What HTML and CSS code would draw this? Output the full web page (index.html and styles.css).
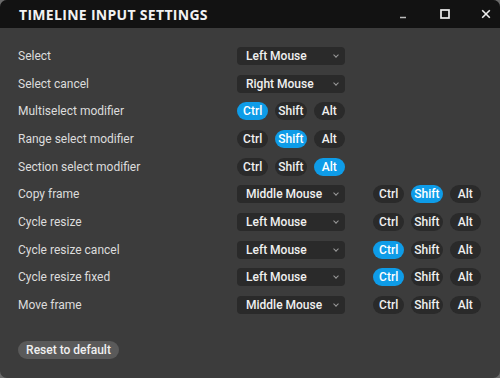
FILE: index.html
```html
<!DOCTYPE html>
<html>
<head>
<meta charset="utf-8">
<link rel="stylesheet" href="styles.css">
</head>
<body>
<div class="window">
  <div class="titlebar">
    <div class="title">TIMELINE INPUT SETTINGS</div>
    <div class="controls">
      <svg class="ctl" width="12" height="12" viewBox="0 0 12 12"><path d="M3 9.5h6" stroke="#bbb" stroke-width="1.5"/></svg>
      <svg class="ctl" width="12" height="12" viewBox="0 0 12 12"><rect x="2" y="2" width="8" height="8" fill="none" stroke="#eee" stroke-width="1.7"/></svg>
      <svg class="ctl" width="12" height="12" viewBox="0 0 12 12"><path d="M2.2 2.2l7.6 7.6M9.8 2.2l-7.6 7.6" stroke="#eee" stroke-width="1.6"/></svg>
    </div>
  </div>
  <div class="content">
    <div class="rows">
      <div class="label">Select</div>
      <div class="select">Left Mouse<span class="chev"></span></div>
      <div></div>

      <div class="label">Select cancel</div>
      <div class="select">Right Mouse<span class="chev"></span></div>
      <div></div>

      <div class="label">Multiselect modifier</div>
      <div class="pills"><span class="pill on">Ctrl</span><span class="pill">Shift</span><span class="pill">Alt</span></div>
      <div></div>

      <div class="label">Range select modifier</div>
      <div class="pills"><span class="pill">Ctrl</span><span class="pill on">Shift</span><span class="pill">Alt</span></div>
      <div></div>

      <div class="label">Section select modifier</div>
      <div class="pills"><span class="pill">Ctrl</span><span class="pill">Shift</span><span class="pill on">Alt</span></div>
      <div></div>

      <div class="label">Copy frame</div>
      <div class="select">Middle Mouse<span class="chev"></span></div>
      <div class="pills extra"><span class="pill">Ctrl</span><span class="pill on">Shift</span><span class="pill">Alt</span></div>

      <div class="label">Cycle resize</div>
      <div class="select">Left Mouse<span class="chev"></span></div>
      <div class="pills extra"><span class="pill">Ctrl</span><span class="pill">Shift</span><span class="pill">Alt</span></div>

      <div class="label">Cycle resize cancel</div>
      <div class="select">Left Mouse<span class="chev"></span></div>
      <div class="pills extra"><span class="pill on">Ctrl</span><span class="pill">Shift</span><span class="pill">Alt</span></div>

      <div class="label">Cycle resize fixed</div>
      <div class="select">Left Mouse<span class="chev"></span></div>
      <div class="pills extra"><span class="pill on">Ctrl</span><span class="pill">Shift</span><span class="pill">Alt</span></div>

      <div class="label">Move frame</div>
      <div class="select">Middle Mouse<span class="chev"></span></div>
      <div class="pills extra"><span class="pill">Ctrl</span><span class="pill">Shift</span><span class="pill">Alt</span></div>
    </div>
    <div class="footer">
      <button class="reset">Reset to default</button>
    </div>
  </div>
</div>
</body>
</html>
```
FILE: styles.css
```css
* { box-sizing: border-box; }
html, body {
  margin: 0;
  padding: 0;
  width: 500px;
  height: 378px;
  background: #6a6a6a;
  overflow: hidden;
}
.window {
  width: 500px;
  height: 378px;
  background: #3c3c3c;
  border-radius: 7px;
  overflow: hidden;
  display: flex;
  flex-direction: column;
  font-family: Roboto, "Liberation Sans", sans-serif;
  font-size: 12px;
  color: #e6e6e6;
}
.titlebar {
  height: 28px;
  background: #121212;
  display: flex;
  align-items: center;
  justify-content: space-between;
  padding: 0 8px 0 19px;
  flex: none;
}
.title {
  font-family: "Open Sans", "DejaVu Sans", sans-serif;
  font-weight: 700;
  font-size: 14px;
  color: #f2f2f2;
  letter-spacing: 0.3px;
  padding-top: 1px;
}
.controls {
  display: flex;
  align-items: center;
  gap: 29.5px;
}
.ctl { display: block; }
.content {
  flex: 1;
  padding: 14px 0 0 18px;
  display: flex;
  flex-direction: column;
}
.rows {
  display: grid;
  grid-template-columns: 219px 108px auto;
  grid-auto-rows: 27.7px;
  align-items: center;
}
.label {
  color: #dcdcdc;
  font-size: 12px;
}
.select {
  width: 108px;
  height: 18px;
  background: #2a2a2a;
  border-radius: 4px;
  padding-left: 9px;
  display: flex;
  align-items: center;
  justify-content: space-between;
  color: #f0f0f0;
  font-weight: 500;
}
.chev {
  width: 4px;
  height: 4px;
  border-right: 1px solid #9a9a9a;
  border-bottom: 1px solid #9a9a9a;
  transform: rotate(45deg);
  margin-right: 7px;
  margin-top: -2px;
}
.pills {
  display: flex;
  gap: 7px;
  width: 108px;
}
.pills.extra {
  margin-left: 28px;
}
.pill {
  width: 31.3px;
  height: 18px;
  border-radius: 9px;
  background: #2a2a2a;
  display: flex;
  align-items: center;
  justify-content: center;
  color: #f0f0f0;
  font-weight: 500;
}
.pill.on {
  background: #0e9ce8;
  color: #ffffff;
}
.footer {
  margin-top: 22px;
}
.reset {
  font-family: Roboto, "Liberation Sans", sans-serif;
  font-size: 12px;
  font-weight: 500;
  color: #f0f0f0;
  background: #5a5a5a;
  border: none;
  border-radius: 9px;
  height: 18px;
  width: 101px;
  padding: 0;
}
```
